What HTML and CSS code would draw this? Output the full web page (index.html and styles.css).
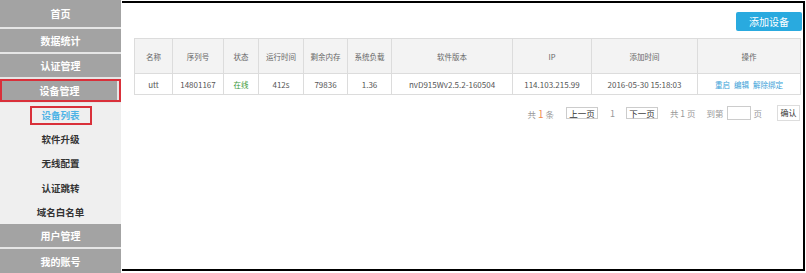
FILE: index.html
```html
<!DOCTYPE html>
<html lang="zh">
<head>
<meta charset="utf-8">
<link rel="stylesheet" href="styles.css">
</head>
<body>
<div class="page">
  <nav class="sidebar">
    <div class="nav-item first">首页</div>
    <div class="nav-item">数据统计</div>
    <div class="nav-item">认证管理</div>
    <div class="nav-item active">设备管理</div>
    <div class="submenu">
      <div class="sub-item current"><span class="sub-label">设备列表</span></div>
      <div class="sub-item"><span class="sub-label">软件升级</span></div>
      <div class="sub-item"><span class="sub-label">无线配置</span></div>
      <div class="sub-item"><span class="sub-label">认证跳转</span></div>
      <div class="sub-item"><span class="sub-label">域名白名单</span></div>
    </div>
    <div class="nav-item">用户管理</div>
    <div class="nav-item last">我的账号</div>
  </nav>
  <main class="main">
    <div class="toolbar">
      <button class="btn-add">添加设备</button>
    </div>
    <table class="grid">
      <thead>
        <tr>
          <th class="c1">名称</th>
          <th class="c2">序列号</th>
          <th class="c3">状态</th>
          <th class="c4">运行时间</th>
          <th class="c5">剩余内存</th>
          <th class="c6">系统负载</th>
          <th class="c7">软件版本</th>
          <th class="c8">IP</th>
          <th class="c9">添加时间</th>
          <th class="c10">操作</th>
        </tr>
      </thead>
      <tbody>
        <tr>
          <td>utt</td>
          <td>14801167</td>
          <td class="online">在线</td>
          <td>412s</td>
          <td>79836</td>
          <td>1.36</td>
          <td>nvD915Wv2.5.2-160504</td>
          <td>114.103.215.99</td>
          <td>2016-05-30 15:18:03</td>
          <td class="ops"><a>重启</a><a>编辑</a><a>解除绑定</a></td>
        </tr>
      </tbody>
    </table>
    <div class="pager">
      <span class="txt total">共 <em class="count">1</em> 条</span>
      <span class="pbtn">上一页</span>
      <span class="txt cur">1</span>
      <span class="pbtn">下一页</span>
      <span class="txt pages">共 1 页</span>
      <span class="txt">到第</span>
      <span class="pinput"></span>
      <span class="txt pg">页</span>
      <span class="pconfirm">确认</span>
    </div>
  </main>
</div>
</body>
</html>
```
FILE: styles.css
```css
* { box-sizing: border-box; }
html, body { margin: 0; padding: 0; background: #fff; }
body {
  font-family: "Noto Sans CJK SC", "Noto Sans", sans-serif;
  font-size: 10px;
  color: #555;
  width: 806px;
  height: 273px;
  overflow: hidden;
}
.page {
  display: flex;
  height: 273px;
}
.sidebar {
  width: 121px;
  flex: none;
  display: flex;
  flex-direction: column;
  background: #e6e6e6;
  height: 273px;
}
.nav-item {
  height: 23px;
  margin-bottom: 2px;
  background: #a3a3a3;
  color: #fff;
  font-size: 10px;
  font-weight: bold;
  display: flex;
  align-items: center;
  justify-content: center;
}
.nav-item.first { height: 27px; }
.nav-item.active {
  margin-bottom: 1px;
  outline: 2px solid #d9303a;
  outline-offset: -2px;
  border-left: 2px solid #e6e6e6;
  border-right: 4px solid #e6e6e6;
  background-clip: padding-box;
}
.submenu {
  background: #efefef;
  height: 121px;
  display: flex;
  flex-direction: column;
}
.sub-item {
  height: 24.2px;
  display: flex;
  align-items: center;
  justify-content: center;
  color: #333;
  font-size: 9.5px;
  font-weight: bold;
}
.sub-item.current .sub-label {
  color: #4db3e6;
  border: 2px solid #d9303a;
  width: 62px;
  height: 19px;
  display: flex;
  align-items: center;
  justify-content: center;
}
.nav-item.last { margin-bottom: 0; flex: 1; }

.main {
  flex: none;
  width: 683px;
  height: 270px;
  margin-top: 1px;
  margin-left: 1px;
  border-top: 2px solid #000;
  border-right: 2px solid #000;
  border-bottom: 2px solid #000;
  padding: 9px 1px 0 12px;
  display: flex;
  flex-direction: column;
  background: #fff;
}
.toolbar {
  display: flex;
  justify-content: flex-end;
  height: 19px;
  margin-bottom: 7px;
}
.btn-add {
  width: 66px;
  height: 19px;
  border: none;
  border-radius: 2px;
  background: #29aadf;
  color: #fff;
  font-family: inherit;
  font-size: 10px;
  padding: 0;
}
.grid {
  width: 666px;
  border-collapse: collapse;
  table-layout: fixed;
  font-size: 8px;
}
.grid th, .grid td {
  border: 1px solid #dcdcdc;
  text-align: center;
  padding: 0;
  white-space: nowrap;
  overflow: hidden;
}
.grid th {
  height: 35px;
  background: #f3f3f3;
  color: #666;
  font-weight: normal;
  font-size: 7.5px;
}
.grid td {
  height: 21px;
  color: #555;
}
.c1 { width: 38px; }
.c2 { width: 51px; }
.c3 { width: 35px; }
.c4 { width: 45px; }
.c5 { width: 44px; }
.c6 { width: 44px; }
.c7 { width: 121px; }
.c8 { width: 79px; }
.c9 { width: 106px; }
.c10 { width: 103px; }
.grid td.online { color: #3c9a3c; font-size: 7.5px; }
.grid td.ops { font-size: 7.5px; }
.ops a { color: #3a9fd8; margin: 0 2px; }
.pager {
  display: flex;
  justify-content: flex-end;
  align-items: center;
  margin-top: 10px;
  height: 16px;
  font-size: 8.5px;
  color: #999;
  padding-right: 2px;
}
.pager .txt { margin-right: 11px; }
.pager .total { margin-right: 12px; }
.pager .cur { margin-right: 11px; font-size: 9px; }
.pager .pages { margin-right: 11px; }
.pager .pg { margin-right: 15px; }
.count { font-style: normal; color: #f08a4b; font-size: 10px; }
.pbtn {
  border: 1px solid #ccc;
  color: #333;
  width: 32px;
  text-align: center;
  height: 12px;
  line-height: 10px;
  margin-right: 12px;
  font-size: 8.5px;
}
.pinput {
  width: 24px;
  height: 14px;
  border: 1px solid #ccc;
  margin-right: 2px;
  margin-left: -7px;
}
.pconfirm {
  border: 1px solid #ddd;
  color: #333;
  height: 16px;
  width: 23px;
  line-height: 14px;
  text-align: center;
  font-size: 8px;
}
```
